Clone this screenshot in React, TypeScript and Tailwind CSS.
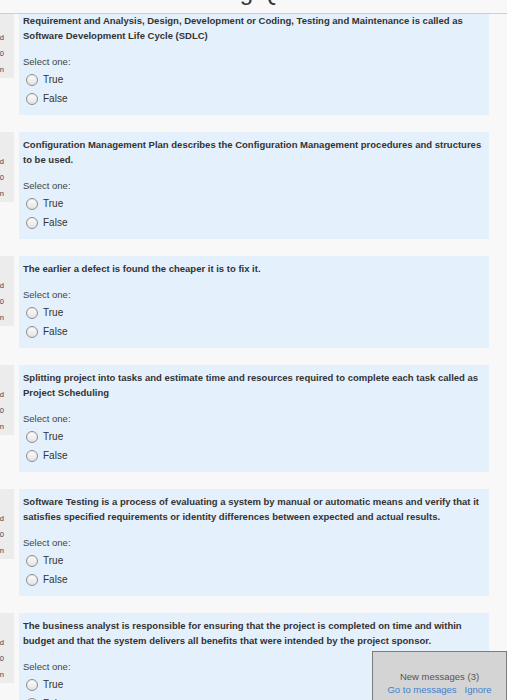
const questions = [
  {
    lines: [
      'Requirement and Analysis, Design, Development or Coding, Testing and Maintenance is called as',
      'Software Development Life Cycle (SDLC)',
    ],
  },
  {
    lines: [
      'Configuration Management Plan describes the Configuration Management procedures and structures',
      'to be used.',
    ],
  },
  { lines: ['The earlier a defect is found the cheaper it is to fix it.'] },
  {
    lines: [
      'Splitting project into tasks and estimate time and resources required to complete each task called as',
      'Project Scheduling',
    ],
  },
  {
    lines: [
      'Software Testing is a process of evaluating a system by manual or automatic means and verify that it',
      'satisfies specified requirements or identity differences between expected and actual results.',
    ],
  },
  {
    lines: [
      'The business analyst is responsible for ensuring that the project is completed on time and within',
      'budget and that the system delivers all benefits that were intended by the project sponsor.',
    ],
  },
]

function Radio({ label }: { label: string }) {
  return (
    <label className="flex items-center h-[19px] pl-[3px] gap-[5px] text-[10px] text-[#333]">
      <span className="w-[12px] h-[12px] rounded-full border border-[#8f8f8f] bg-gradient-to-b from-white to-[#e2e2e2] shadow-[inset_0_1px_1px_rgba(0,0,0,0.08)]" />
      {label}
    </label>
  )
}

function Question({ lines }: { lines: string[] }) {
  return (
    <div className="flex items-start">
      <div className="w-[14px] h-[70px] shrink-0 overflow-hidden bg-[#ececec]">
        <div className="flex flex-col items-end pr-[10px] pt-[22px] text-[7.5px] leading-[16px] text-[#444] whitespace-nowrap">
          <span>Not yet answered</span>
          <span>Marked out of 1.00</span>
          <span>Flag question</span>
        </div>
      </div>
      <div className="ml-[5px] w-[470px] bg-[#e4f0fb] pt-[5px] pb-[7px] pl-[4px]">
        <div className="text-[9.5px] font-bold leading-[15px] text-[#333] whitespace-nowrap">
          {lines.map((l, i) => (
            <div key={i}>{l}</div>
          ))}
        </div>
        <div className="mt-[11px] text-[9.5px] leading-[15px] text-[#444]">Select one:</div>
        <div className="mt-[1px]">
          <Radio label="True" />
          <Radio label="False" />
        </div>
      </div>
    </div>
  )
}

export default function App() {
  return (
    <div className="min-h-[700px] bg-[#f8f8f8] font-['Liberation_Sans',Arial,sans-serif]">
      <div className="fixed top-0 inset-x-0 h-[14px] overflow-hidden bg-[#f8f8f8] border-b border-[#cfcfcf] z-10">
        <div className="mt-[-20px] pl-[177px] text-[24px] leading-none text-[#333] whitespace-nowrap">Testing Quiz</div>
      </div>

      <div className="flex flex-col gap-[17px] pt-[8px] pb-[40px]">
        {questions.map((q, i) => (
          <Question key={i} lines={q.lines} />
        ))}
      </div>

      <div className="fixed left-[372px] top-[651px] w-[135px] h-[60px] bg-[#d4d4d4] border border-[#7d7d7d] text-center pt-[18px] text-[9.5px] leading-[13px]">
        <div className="text-[#555]">New messages (3)</div>
        <div className="flex justify-center gap-[8px] text-[#3d7fd0]">
          <span>Go to messages</span>
          <span>Ignore</span>
        </div>
      </div>
    </div>
  )
}
